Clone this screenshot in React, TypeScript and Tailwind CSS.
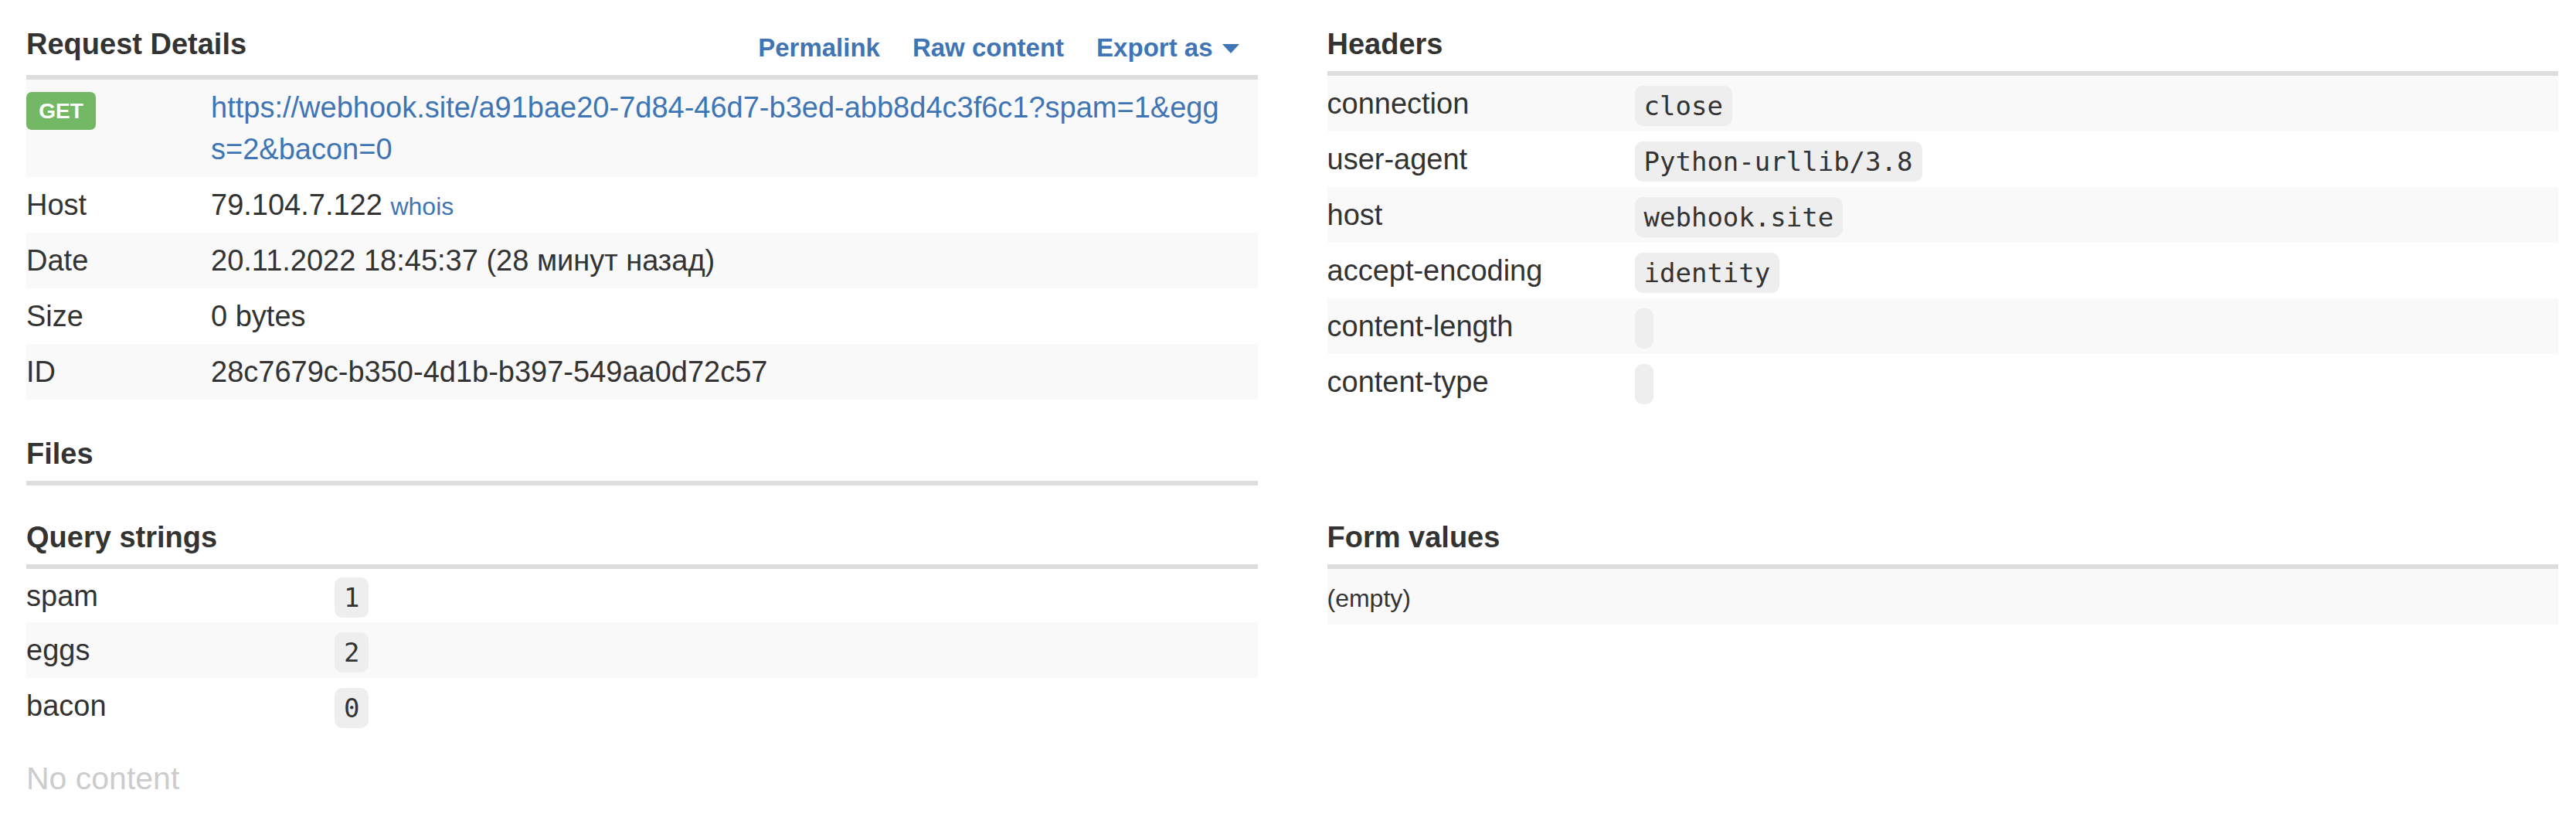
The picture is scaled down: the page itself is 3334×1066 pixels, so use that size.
import React from "react";

const LINK = "text-[#3f75b5]";

const SectionTitle: React.FC<{ title: string; className?: string }> = (props) => {
  return (
    <div className={`border-b-[6px] border-[#dddddd] pb-[8px] ${props.className ?? ""}`}>
      <h3 className="text-[38px] font-bold leading-[54px]">{props.title}</h3>
    </div>
  );
};

const Code: React.FC<{ text?: string }> = (props) => {
  return (
    <code className="mt-[5px] inline-block h-[52px] rounded-[10px] bg-[#eeeeee] px-[12px] font-['DejaVu_Sans_Mono',monospace] text-[34px] leading-[52px] text-[#333333]">
      {props.text}
    </code>
  );
};

const headers: [string, string][] = [
  ["connection", "close"],
  ["user-agent", "Python-urllib/3.8"],
  ["host", "webhook.site"],
  ["accept-encoding", "identity"],
  ["content-length", ""],
  ["content-type", ""],
];

const queryStrings: [string, string][] = [
  ["spam", "1"],
  ["eggs", "2"],
  ["bacon", "0"],
];

const details: [string, React.ReactNode][] = [
  [
    "Host",
    <>
      79.104.7.122 <a className={`${LINK} text-[32px] leading-none`}>whois</a>
    </>,
  ],
  ["Date", "20.11.2022 18:45:37 (28 минут назад)"],
  ["Size", "0 bytes"],
  ["ID", "28c7679c-b350-4d1b-b397-549aa0d72c57"],
];

export default function App() {
  return (
    <div className="min-h-[1066px] w-full bg-white pl-[34px] pr-[23px] pt-[30px] font-['Liberation_Sans',Arial,sans-serif] text-[38px] leading-[54px] text-[#333333]">
      <div className="grid grid-cols-2 gap-x-[90px]">
        {/* left: request details + files */}
        <div>
          <div className="flex items-start justify-between border-b-[6px] border-[#dddddd] pb-[12px]">
            <h3 className="text-[38px] font-bold leading-[54px]">Request Details</h3>
            <div className={`mt-[8px] flex items-center gap-[42px] pr-[24px] text-[33px] font-bold leading-[47px] ${LINK}`}>
              <a>Permalink</a>
              <a>Raw content</a>
              <a className="flex items-center">
                Export as
                <span className="ml-[12px] mt-[3px] inline-block h-0 w-0 border-x-[11px] border-t-[12px] border-x-transparent border-t-[#3f75b5]" />
              </a>
            </div>
          </div>
          <div className="flex h-[126px] bg-[#f9f9f9] py-[9px]">
            <div className="w-[239px] shrink-0">
              <span className="mt-[7px] flex h-[49px] w-[90px] items-center justify-center rounded-[7px] bg-[#73b865] text-[28px] font-bold leading-none text-white">
                GET
              </span>
            </div>
            <a className={`${LINK} break-all`}>
              https://webhook.site/a91bae20-7d84-46d7-b3ed-abb8d4c3f6c1?spam=1&amp;egg
              <br />
              s=2&amp;bacon=0
            </a>
          </div>
          {details.map(([k, v], i) => (
            <div key={k} className={`flex h-[72px] py-[9px] ${i % 2 === 1 ? "bg-[#f9f9f9]" : ""}`}>
              <div className="w-[239px] shrink-0">{k}</div>
              <div>{v}</div>
            </div>
          ))}
          <SectionTitle title="Files" className="mt-[43px]" />
        </div>

        {/* right: headers */}
        <div>
          <SectionTitle title="Headers" />
          {headers.map(([k, v], i) => (
            <div key={k} className={`flex h-[72px] items-center ${i % 2 === 0 ? "bg-[#f9f9f9]" : ""}`}>
              <div className="w-[398px] shrink-0">{k}</div>
              <Code text={v} />
            </div>
          ))}
        </div>

        {/* row 2 */}
        <div className="mt-[40px]">
          <SectionTitle title="Query strings" />
          {queryStrings.map(([k, v], i) => (
            <div
              key={k}
              className={`flex items-center ${i === 0 ? "h-[69px]" : "h-[72px]"} ${i % 2 === 1 ? "bg-[#f9f9f9]" : ""}`}
            >
              <div className="w-[399px] shrink-0">{k}</div>
              <Code text={v} />
            </div>
          ))}
          <p className="mt-[29px] text-[41px] leading-[58px] text-[#cccccc]">No content</p>
        </div>

        <div className="mt-[40px]">
          <SectionTitle title="Form values" />
          <div className="h-[72px] bg-[#f9f9f9] py-[9px]">
            <small className="text-[32px] leading-none">(empty)</small>
          </div>
        </div>
      </div>
    </div>
  );
}
